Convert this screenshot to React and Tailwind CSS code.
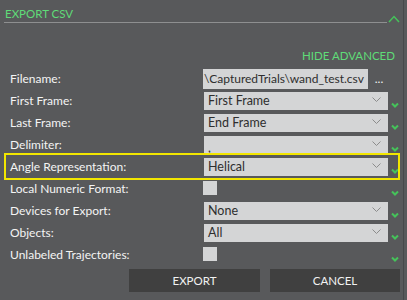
import React from "react";

const font = { fontFamily: 'Lato, "Noto Sans", sans-serif' };

function Check() {
  return (
    <div className="w-[13px] h-full flex items-end justify-center pb-[4px]">
      <svg width="8" height="6" viewBox="0 0 8 6">
        <path d="M1 1.5 L4 4.5 L7 1.5" fill="none" stroke="#45c35a" strokeWidth="2" />
      </svg>
    </div>
  );
}

function Chevron() {
  return (
    <svg width="9" height="6" viewBox="0 0 9 6" className="mb-[2px]">
      <path d="M0.5 0.5 L4.5 4.5 L8.5 0.5" fill="none" stroke="#8c8c8c" strokeWidth="1" />
    </svg>
  );
}

function Row({ label, children, highlight }) {
  return (
    <div className="relative flex h-[22px] items-center">
      {highlight && (
        <div className="absolute left-[4px] right-[7px] top-[-3px] bottom-[-2px] border-2 border-[#f2e600] pointer-events-none" />
      )}
      <div className="w-[204px] pl-[10px] text-[12px] text-[#f4f4f4] leading-[22px] whitespace-nowrap">
        {label}
      </div>
      {children}
    </div>
  );
}

function Select({ value }) {
  return (
    <>
      <div className="w-[184px] h-[18px] bg-[#d4d5d6] flex items-center justify-between pl-[4px] pr-[7px]">
        <span className="text-[12.5px] text-[#2e2e2e] leading-[18px]">{value}</span>
        <Chevron />
      </div>
      <Check />
    </>
  );
}

function Box() {
  return (
    <>
      <div className="w-[184px] h-[18px] flex items-center">
        <div className="w-[14px] h-[14px] bg-[#d4d5d6] mt-[-2px] ml-[-1px]" />
      </div>
      <Check />
    </>
  );
}

export default function App() {
  return (
    <div className="w-[407px] h-[300px] bg-[#58595b] relative overflow-hidden" style={font}>
      <div className="absolute top-0 bottom-0 left-[403px] w-[1px] bg-[#47484a]" />
      <div className="flex items-end">
        <div className="ml-[4px] w-[383px] flex flex-col">
          <div className="pt-[6px] pl-[1px] text-[11.5px] leading-[15px] text-[#5fdc78]">EXPORT CSV</div>
          <div className="mt-[1px] h-[1px] bg-[#8e8f90]" />
        </div>
        <svg width="12" height="8" viewBox="0 0 12 8" className="ml-[1px]">
          <path d="M1 7 L6 1.5 L11 7" fill="none" stroke="#45c35a" strokeWidth="1.5" />
        </svg>
      </div>
      <div className="h-[25px]" />
      <div className="flex justify-end pr-[12px] h-[15px] items-center">
        <span className="text-[11.5px] text-[#5fdc78] leading-[15px]">HIDE ADVANCED</span>
      </div>
      <div className="h-[5px]" />
      <Row label="Filename:">
        <div className="w-[165px] h-[20px] bg-[#d4d5d6] ml-[-1px] flex items-center overflow-hidden">
          <span className="text-[12px] text-[#2e2e2e] whitespace-nowrap leading-[20px] pl-[1px]">\CapturedTrials\wand_test.csv</span>
        </div>
        <div className="w-[22px] text-center text-[12px] text-[#f2f2f2] leading-[14px]">...</div>
      </Row>
      <Row label="First Frame:"><Select value="First Frame" /></Row>
      <Row label="Last Frame:"><Select value="End Frame" /></Row>
      <Row label="Delimiter:">
        <div className="w-[184px] h-[18px] bg-[#d4d5d6] flex items-end justify-between pl-[4px] pr-[7px]">
          <span className="text-[12.5px] text-[#2e2e2e] leading-[12px]">,</span>
          <div className="h-full flex items-center"><Chevron /></div>
        </div>
        <Check />
      </Row>
      <Row label="Angle Representation:" highlight><Select value="Helical" /></Row>
      <Row label="Local Numeric Format:"><Box /></Row>
      <Row label="Devices for Export:"><Select value="None" /></Row>
      <Row label="Objects:"><Select value="All" /></Row>
      <Row label="Unlabeled Trajectories:"><Box /></Row>
      <div className="flex mt-[3px] pl-[129px] gap-[10px]">
        <div className="w-[131px] h-[23px] bg-[#404040] text-[#f2f2f2] text-[11.5px] flex items-center justify-center">EXPORT</div>
        <div className="w-[130px] h-[23px] bg-[#404040] text-[#f2f2f2] text-[11.5px] flex items-center justify-center">CANCEL</div>
      </div>
    </div>
  );
}
